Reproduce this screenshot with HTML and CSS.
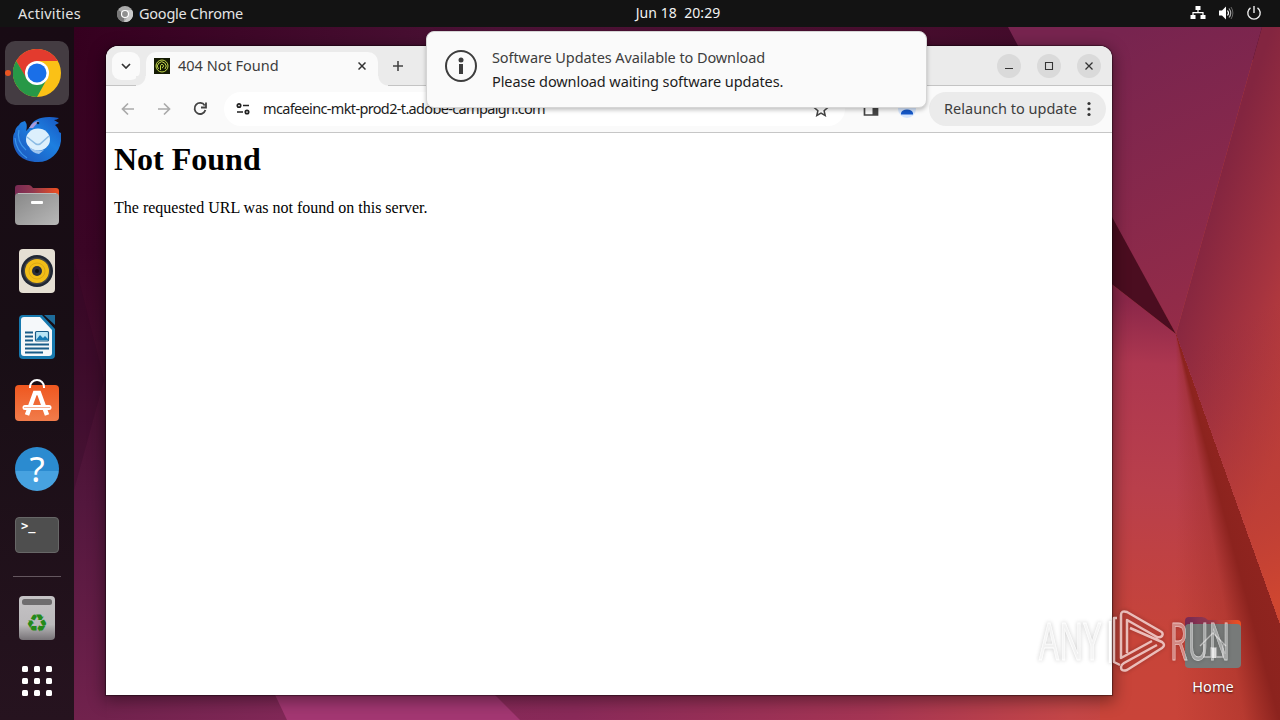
FILE: index.html
```html
<!DOCTYPE html>
<html lang="en">
<head>
    <meta charset="UTF-8">
    <meta name="viewport" content="width=device-width, initial-scale=1.0">
    <title>404 Not Found</title>
    <link rel="stylesheet" href="styles.css">
</head>
<body>
    <svg class="wallpaper" viewBox="0 0 1280 720">
        <defs>
            <linearGradient id="w-left" x1="0" y1="0" x2="0" y2="1">
                <stop offset="0" stop-color="#36001f"/>
                <stop offset=".35" stop-color="#3a0525"/>
                <stop offset=".5" stop-color="#420d2c"/>
                <stop offset=".7" stop-color="#53173d"/>
                <stop offset="1" stop-color="#71224d"/>
            </linearGradient>
            <linearGradient id="w-top" x1="0" y1="0" x2="1" y2="0">
                <stop offset="0" stop-color="#35001f"/>
                <stop offset=".35" stop-color="#4c1236"/>
                <stop offset=".6" stop-color="#4a0f30"/>
                <stop offset="1" stop-color="#3c0726"/>
            </linearGradient>
            <linearGradient id="w-bottom" gradientUnits="userSpaceOnUse" x1="106" y1="0" x2="1280" y2="0">
                <stop offset="0" stop-color="#71224d"/>
                <stop offset=".15" stop-color="#812857"/>
                <stop offset=".4" stop-color="#8a2a59"/>
                <stop offset=".65" stop-color="#a53554"/>
                <stop offset=".82" stop-color="#c44647"/>
                <stop offset="1" stop-color="#c9432f"/>
            </linearGradient>
            <linearGradient id="w-sky" gradientUnits="userSpaceOnUse" x1="1080" y1="50" x2="1200" y2="330">
                <stop offset="0" stop-color="#77244f"/>
                <stop offset="1" stop-color="#952c48"/>
            </linearGradient>
            <linearGradient id="w-right" gradientUnits="userSpaceOnUse" x1="1200" y1="230" x2="1340" y2="280">
                <stop offset="0" stop-color="#832540"/>
                <stop offset=".55" stop-color="#a7343f"/>
                <stop offset="1" stop-color="#c8433a"/>
            </linearGradient>
            <linearGradient id="w-right-low" gradientUnits="userSpaceOnUse" x1="1180" y1="350" x2="1300" y2="590">
                <stop offset="0" stop-color="#8f2a3e" stop-opacity="0"/>
                <stop offset="1" stop-color="#cf4630"/>
            </linearGradient>
            <linearGradient id="w-low" gradientUnits="userSpaceOnUse" x1="1130" y1="300" x2="1110" y2="720">
                <stop offset="0" stop-color="#8b2749"/>
                <stop offset=".15" stop-color="#ad3750"/>
                <stop offset=".45" stop-color="#b93f4b"/>
                <stop offset=".8" stop-color="#c74439"/>
                <stop offset="1" stop-color="#c94439"/>
            </linearGradient>
        </defs>
        <rect width="1280" height="720" fill="url(#w-bottom)"/>
        <rect width="107" height="720" fill="url(#w-left)"/>
        <path d="M74 260 104 380 74 490z" fill="#2c0622" opacity=".25"/>
        <path d="M230 600H400L520 720H287z" fill="#a33772"/>
        <path d="M74 27H1280V60H74z" fill="url(#w-top)"/>
        <path d="M1008 27H1262L1176 334 1090 180z" fill="url(#w-sky)"/>
        <path d="M1262 27H1280V720L1176 334z" fill="url(#w-right)"/>
        <path d="M1176 334 1280 240V640z" fill="url(#w-right-low)"/>
        <path d="M1100 275 1176 334 1280 624V720H1100z" fill="url(#w-low)"/>
        <path d="M1100 195 1176 334 1100 275z" fill="#4b0d20"/>
    </svg>
    <div class="wallpaper-fold"></div>

    <header class="topbar">
        <span class="activities">Activities</span>
        <span class="app-menu">
            <svg width="16" height="16" viewBox="0 0 16 16">
                <circle cx="8" cy="8" r="8" fill="#aaa"/>
                <path d="M8 8 1 4A8 8 0 0 0 6.500 15.900z" fill="#777"/>
                <path d="M8 4H15A8 8 0 0 1 7 16L12 9z" fill="#c9c9c9"/>
                <circle cx="8" cy="8" r="3.500" fill="#8f8f8f" stroke="#fff" stroke-width="1.200"/>
            </svg>
            <span>Google Chrome</span>
        </span>
        <span class="clock">Jun 18&nbsp; 20:29</span>
        <span class="status">
            <svg width="16" height="16" viewBox="0 0 16 16" fill="#fff">
                <path d="M5.500 1h5v4h-5zM.500 10h5v4h-5zM10.500 10h5v4h-5z"/>
                <path d="M8 5v3M3 10V7.700h10V10" fill="none" stroke="#fff" stroke-width="1.200"/>
            </svg>
            <svg width="16" height="16" viewBox="0 0 16 16" fill="none">
                <path d="M1 5.500h3L8 1.500v13l-4-4H1z" fill="#fff"/>
                <path d="M9.500 5.500q2 2.500 0 5" stroke="#fff" stroke-width="1.200"/>
                <path d="M11 3.500q3.500 4.500 0 9" stroke="#aaa" stroke-width="1.200"/>
                <path d="M13 2q3.800 6 0 12" stroke="#666"/>
            </svg>
            <svg width="16" height="16" viewBox="0 0 16 16" fill="none" stroke="#eee" stroke-width="1.400">
                <path d="M8 1v7M4.500 2.800a6.200 6.200 0 1 0 7 0"/>
            </svg>
        </span>
    </header>

    <nav class="dock">
        <a class="dock-item active">
            <svg width="48" height="48" viewBox="0 0 48 48">
                <circle cx="24" cy="24" r="24" fill="#fbc116"/>
                <path d="M24 12H44.800A24 24 0 0 0 3.200 12L14 31z" fill="#e33b2e"/>
                <path d="M3.200 12 14 30 24 36 34 30 24 48A24 24 0 0 1 3.200 12z" fill="#279847"/>
                <circle cx="24" cy="24" r="12" fill="#fff"/>
                <circle cx="24" cy="24" r="9.500" fill="#1a6fe8"/>
            </svg>
        </a>
        <a class="dock-item">
            <svg width="48" height="48" viewBox="0 0 48 48">
                <defs>
                    <linearGradient id="bird" x1="0" y1="1" x2="1" y2="0">
                        <stop offset="0" stop-color="#1c52b8"/>
                        <stop offset=".6" stop-color="#1d7fe0"/>
                        <stop offset="1" stop-color="#1855c0"/>
                    </linearGradient>
                </defs>
                <path d="M0 24Q0 19 2 17q0-4 4-7 1-3 6-4 3 4 1 10l4-4C20 4 30 0 46 3q-2 2-5 2l5 3-4 2c2 2 4 4 4 7l2 1C50 34 40 47 25 47 8 47 0 37 0 24z" fill="url(#bird)"/>
                <path d="M2 23q1 13 12 20M6 15q-3 11 7 20" fill="none" stroke="#3b96ea" stroke-width="1.200"/>
                <path d="M16 13q4-7 10-7l-6 7z" fill="#a99bd9"/>
                <circle cx="25" cy="8" r="1.300" fill="#123"/>
                <ellipse cx="25" cy="24.500" rx="12" ry="11" fill="#dceffc"/>
                <path d="m14 22 9 7q2 1 4 0l9-8" fill="none" stroke="#8bbbe4" stroke-width="1.500"/>
                <path d="M16 32q7 5 15 3l-5 4q-7-1-10-7z" fill="#9fc5ee"/>
            </svg>
        </a>
        <a class="dock-item">
            <svg width="48" height="48" viewBox="0 0 48 48">
                <defs>
                    <linearGradient id="tab" x1="0" y1="0" x2="1" y2="0">
                        <stop offset="0" stop-color="#772953"/>
                        <stop offset=".4" stop-color="#913850"/>
                        <stop offset="1" stop-color="#f05020"/>
                    </linearGradient>
                    <linearGradient id="folder" x1="0" y1="0" x2="1" y2="1">
                        <stop offset="0" stop-color="#888"/>
                        <stop offset="1" stop-color="#b8b8b8"/>
                    </linearGradient>
                </defs>
                <path d="M2 16V7q0-3 3-3h11q2 0 4 3h23q3 0 3 3v10H2z" fill="url(#tab)"/>
                <rect x="2" y="12" width="44" height="32" rx="4" fill="url(#folder)"/>
                <path d="M5 12.500h38" stroke="#bbb"/>
                <rect x="18" y="20" width="12" height="3" rx="1" fill="#fff"/>
            </svg>
        </a>
        <a class="dock-item">
            <svg width="48" height="48" viewBox="0 0 48 48">
                <rect x="6" y="2" width="36" height="44" rx="4" fill="#e5dfd3"/>
                <circle cx="24" cy="24" r="16" fill="#202734"/>
                <circle cx="24" cy="24" r="13.500" fill="#444"/>
                <circle cx="24" cy="24" r="12" fill="#f2bd17"/>
                <circle cx="24" cy="24" r="8" fill="none" stroke="#dba916"/>
                <circle cx="24" cy="24" r="5" fill="#292e3c"/>
                <circle cx="24" cy="24" r="2" fill="#111"/>
            </svg>
        </a>
        <a class="dock-item">
            <svg width="48" height="48" viewBox="0 0 48 48">
                <path d="M10 2h19l13 14v26q0 4-4 4H10q-4 0-4-4V6q0-4 4-4z" fill="#1779ae"/>
                <path d="M11 4h16l12 13v23q0 3-3 3H11q-3 0-3-3V7q0-3 3-3z" fill="#f5f8fa"/>
                <path d="M31 2h11v10z" fill="#1e6c9b"/>
                <path d="M12 19.500h8M12 23.500h8M12 27.500h8M12 31.500h24M12 35.500h24M12 39.500h18" stroke="#195c88" stroke-width="2"/>
                <rect x="22.500" y="18.500" width="13" height="9.500" rx="1" fill="#b9e5f5" stroke="#195c88" stroke-width="1.200"/>
                <path d="m23 27 4-5 3 3 2-2 4 4z" fill="#167ab4"/>
            </svg>
        </a>
        <a class="dock-item">
            <svg class="store" width="48" height="48" viewBox="0 0 48 48">
                <defs>
                    <linearGradient id="bag" x1="0" y1="0" x2="0" y2="1">
                        <stop offset="0" stop-color="#ef571f"/>
                        <stop offset="1" stop-color="#f17c4b"/>
                    </linearGradient>
                </defs>
                <rect x="2" y="7" width="44" height="36" rx="4" fill="url(#bag)"/>
                <path d="M17 10V9a7 7 0 0 1 14 0v1" fill="none" stroke="#fff" stroke-width="2"/>
                <path d="m14 37 8-22h4l8 22" fill="none" stroke="#fff" stroke-width="4.500"/>
                <path d="M12 29.500h24" stroke="#fff" stroke-width="5" stroke-linecap="round"/>
                <path d="M11 29.500h26" stroke="#f5b196"/>
            </svg>
        </a>
        <a class="dock-item">
            <span class="help-icon">?</span>
        </a>
        <a class="dock-item">
            <span class="terminal-icon">&gt;_</span>
        </a>
        <hr>
        <a class="dock-item trash">
            <svg width="48" height="48" viewBox="0 0 48 48">
                <defs>
                    <linearGradient id="bin" x1="0" y1="0" x2="0" y2="1">
                        <stop offset="0" stop-color="#c5c3c5"/>
                        <stop offset=".65" stop-color="#bbb9bb"/>
                        <stop offset="1" stop-color="#777377"/>
                    </linearGradient>
                </defs>
                <rect x="6" y="2" width="36" height="44" rx="4" fill="url(#bin)"/>
                <rect x="9" y="5" width="30" height="6" rx="2.500" fill="#6e6c6e"/>
            </svg>
            <span class="recycle">&#9851;</span>
        </a>
        <a class="dock-item apps">
            <span class="dots">
                <i></i><i></i><i></i>
                <i></i><i></i><i></i>
                <i></i><i></i><i></i>
            </span>
        </a>
    </nav>

    <main class="window">
        <div class="tabstrip">
            <button class="tab-search">
                <svg width="10" height="6" viewBox="0 0 10 6"><path d="m1 1 4 4 4-4" fill="none" stroke="#333" stroke-width="1.700"/></svg>
            </button>
            <div class="tab">
                <svg width="16" height="16" viewBox="0 0 16 16" fill="none" stroke="#c4d94b">
                    <path d="M0 0h16v16H0z" fill="#151b04" stroke="none"/>
                    <circle cx="8" cy="8" r="6"/>
                    <path d="M4.500 11A4.300 4.300 0 1 1 11 11M6.500 12V7.500a1.600 1.600 0 0 1 3 0q0 2-1.500 2.500"/>
                </svg>
                <span class="tab-title">404 Not Found</span>
                <svg class="tab-close" width="8" height="8" viewBox="0 0 8 8"><path d="m.5.500 7 7m0-7-7 7" stroke="#333" stroke-width="1.500"/></svg>
            </div>
            <svg class="new-tab" width="10" height="10" viewBox="0 0 10 10"><path d="M5 0v10M0 5h10" stroke="#444" stroke-width="1.600"/></svg>
            <div class="controls">
                <button><svg width="10" height="10" viewBox="0 0 10 10"><path d="M1 7.500h8" stroke="#333" stroke-width="1.100"/></svg></button>
                <button><svg width="10" height="10" viewBox="0 0 10 10"><path d="M1.500 1.500h7v7h-7z" fill="none" stroke="#333" stroke-width="1.100"/></svg></button>
                <button><svg width="10" height="10" viewBox="0 0 10 10"><path d="m1.500 1.500 7 7m0-7-7 7" stroke="#333" stroke-width="1.300"/></svg></button>
            </div>
        </div>
        <div class="toolbar">
            <svg width="16" height="16" viewBox="0 0 16 16" fill="none" stroke="#aaa" stroke-width="1.700"><path d="M14 8H3M8 2.500 2.500 8 8 13.500"/></svg>
            <svg width="16" height="16" viewBox="0 0 16 16" fill="none" stroke="#aaa" stroke-width="1.700"><path d="M2 8h11M8 2.500 13.500 8 8 13.500"/></svg>
            <svg width="16" height="16" viewBox="0 0 16 16" fill="none" stroke="#444" stroke-width="1.800"><path d="M12.700 4.400A5.500 5.500 0 1 0 13.400 9M14 1.500v5H9"/></svg>
            <div class="address">
                <svg width="14" height="14" viewBox="0 0 14 14" fill="none" stroke="#222" stroke-width="1.700"><circle cx="3" cy="3.500" r="1.700"/><circle cx="11" cy="10" r="1.700"/><path d="M7 3.500h6M1 10h6"/></svg>
                <span class="url">mcafeeinc-mkt-prod2-t.adobe-campaign.com</span>
                <svg class="star" width="16" height="16" viewBox="0 0 16 16"><path d="m8 1.500 1.900 4.600 4.900.4-3.700 3.200 1.100 4.800L8 12l-4.200 2.500 1.100-4.800L1.200 6.500l4.900-.4z" fill="none" stroke="#444" stroke-width="1.500"/></svg>
            </div>
            <svg class="side-panel" width="16" height="16" viewBox="0 0 16 16"><path d="M1.500 2h13v12h-13z" fill="none" stroke="#444" stroke-width="1.700"/><path d="M9.500 2h5v12h-5z" fill="#444"/></svg>
            <svg class="profile" width="20" height="20" viewBox="0 0 20 20"><circle cx="10" cy="10" r="9" fill="#d6e6fd"/><circle cx="10" cy="6" r="3" fill="#1557c7"/><path d="M4 15.500v-1.500q1-3.500 6-3.500t6 3.500v1.500z" fill="#1557c7"/></svg>
            <button class="relaunch">
                <span>Relaunch to update</span>
                <svg width="4" height="16" viewBox="0 0 4 16" fill="#333"><circle cx="2" cy="2.500" r="1.600"/><circle cx="2" cy="8" r="1.600"/><circle cx="2" cy="13.500" r="1.600"/></svg>
            </button>
        </div>
        <article class="page">
            <h1>Not Found</h1>
            <p>The requested URL was not found on this server.</p>
        </article>
    </main>

    <div class="home">
        <svg width="56" height="52" viewBox="0 0 56 52">
            <path d="M0 12V5q0-4 4-4h13q3 0 6 3h29q4 0 4 4v8H0z" fill="url(#tab)"/>
            <rect y="8" width="56" height="44" rx="4" fill="#777a79"/>
            <path d="m15 30 13-13 13 13M19 28v13h7v-9h5v9h7V28" fill="none" stroke="#c4c4c4" stroke-width="1.300"/>
            <path d="M27 32h4v10h-4z" fill="#e7e7e7"/>
        </svg>
        <span>Home</span>
    </div>

    <svg class="watermark" width="240" height="90" viewBox="0 0 240 90">
        <text x="8" y="55" textLength="62" lengthAdjust="spacingAndGlyphs">ANY</text>
        <path d="M79 16v42M86 13h-3v44l6 3M96 48V15l30 17q3 1 5-1 2-3-2-5L96 7q-6-2-6 3v43l31-17M99 23l32 14q4 3 0 6L96 65q-6 2-6-3 0-2 3-4l33-18"/>
        <text x="139" y="55" textLength="60" lengthAdjust="spacingAndGlyphs">RUN</text>
    </svg>

    <aside class="notification">
        <svg width="32" height="32" viewBox="0 0 32 32">
            <circle cx="16" cy="16" r="15" fill="none" stroke="#3d3d3d" stroke-width="2"/>
            <circle cx="16" cy="10" r="2.500" fill="#3d3d3d"/>
            <path d="M14 14h4v10h-4z" fill="#3d3d3d"/>
        </svg>
        <div>
            <p class="title">Software Updates Available to Download</p>
            <p class="message">Please download waiting software updates.</p>
        </div>
    </aside>
</body>
</html>
```
FILE: styles.css
```css
* {
    box-sizing: border-box;
}
body {
    margin: 0;
    width: 1280px;
    height: 720px;
    overflow: hidden;
    position: relative;
    background: #35001f;
    font-family: "Noto Sans", "Open Sans", sans-serif;
    font-size: 15px;
    color: #3d3d3d;
}
svg {
    display: block;
    flex: none;
}
button {
    border: none;
    padding: 0;
    font: inherit;
    color: inherit;
    display: flex;
    align-items: center;
    justify-content: center;
}
.wallpaper {
    position: absolute;
    top: 0;
    left: 0;
    width: 1280px;
    height: 720px;
}
/* shaded crease fanning out from the right-hand corner point */
.wallpaper-fold {
    position: absolute;
    left: 1112px;
    top: 334px;
    width: 168px;
    height: 386px;
    background: conic-gradient(at 64px 0, transparent 160.3deg, #8f241f 160.3deg, #8c231e 165deg, rgba(150, 40, 32, 0.35) 170deg, rgba(150, 40, 32, 0) 180deg);
}

/* top panel */
.topbar {
    position: relative;
    height: 27px;
    background: #131313;
    color: #e4e4e4;
    display: grid;
    grid-template-columns: 117px 518px 86px 1fr 117px;
    align-items: center;
    line-height: 27px;
    font-size: 14.5px;
    white-space: nowrap;
}
.activities {
    padding-left: 18px;
    letter-spacing: 0.25px;
}
.app-menu {
    display: flex;
    align-items: center;
    gap: 6px;
    letter-spacing: -0.23px;
}
.clock {
    color: #f2f2f2;
    font-size: 14px;
    line-height: 25px;
    letter-spacing: 0.05px;
    padding-bottom: 2px;
    text-align: center;
}
.status {
    grid-column: 5;
    display: flex;
    gap: 12px;
    padding: 0 0 1px 27px;
}

/* dock */
.dock {
    position: relative;
    width: 74px;
    height: 693px;
    padding-top: 14px;
    background: linear-gradient(#180b14, #180e15 45%, #26131f);
    display: flex;
    flex-direction: column;
    align-items: center;
    gap: 2px;
}
.dock-item {
    width: 64px;
    height: 64px;
    border-radius: 10px;
    flex: none;
    display: flex;
    align-items: center;
    justify-content: center;
    position: relative;
}
.dock-item.active {
    background: #443c42;
}
.dock-item.active::before {
    content: "";
    position: absolute;
    left: 0;
    top: 29px;
    width: 6px;
    height: 6px;
    border-radius: 50%;
    background: #e95420;
}
.store {
    margin-bottom: 3px;
}
.help-icon {
    width: 44px;
    height: 44px;
    border-radius: 50%;
    background: linear-gradient(#2b8bd0 0 55%, #47a2e0 55%);
    color: #fff;
    font-size: 35px;
    line-height: 44px;
    text-align: center;
}
.terminal-icon {
    width: 44px;
    height: 36px;
    border-radius: 4px;
    background: #4e4e4e;
    border: 1px solid #676767;
    color: #fff;
    font: bold 12px/17px "DejaVu Sans Mono", monospace;
    padding-left: 5px;
}
.dock hr {
    width: 48px;
    height: 1px;
    margin: 7px 0;
    border: none;
    flex: none;
    background: #64575f;
}
.recycle {
    position: absolute;
    top: 22px;
    left: 0;
    width: 64px;
    text-align: center;
    color: #258a1a;
    font: bold 25px/32px "DejaVu Sans", sans-serif;
}
.apps {
    height: 58px;
}
.dots {
    display: grid;
    grid-template-columns: repeat(3, 6px);
    gap: 6px;
}
.dots i {
    height: 6px;
    border-radius: 1.5px;
    background: #fff;
}

/* browser window */
.window {
    position: absolute;
    left: 106px;
    top: 46px;
    width: 1006px;
    height: 649px;
    border-radius: 12px 12px 0 0;
    overflow: hidden;
    background: #fff;
    box-shadow: 0 0 1px 1px rgba(0, 0, 0, 0.4), 0 4px 16px 2px rgba(0, 0, 0, 0.4);
}
.tabstrip {
    height: 40px;
    background: #ebebeb;
    border-bottom: 1px solid #c4c4c4;
    display: flex;
    align-items: center;
}
.tab-search {
    width: 28px;
    height: 28px;
    margin-left: 6px;
    border-radius: 9px;
    background: #fafafa;
}
.tab {
    align-self: flex-end;
    width: 232px;
    height: 34px;
    margin: 0 0 -1px 6px;
    padding: 0 12px 6px 8px;
    background: #fafafa;
    border-radius: 10px 10px 0 0;
    display: flex;
    align-items: center;
    position: relative;
}
/* curved feet of the active tab */
.tab::before, .tab::after {
    content: "";
    position: absolute;
    bottom: 0;
    width: 10px;
    height: 10px;
}
.tab::before {
    left: -10px;
    background: radial-gradient(circle at 0 0, #ebebeb 9px, #fafafa 10px);
}
.tab::after {
    right: -10px;
    background: radial-gradient(circle at 100% 0, #ebebeb 9px, #fafafa 10px);
}
.tab-title {
    flex: 1;
    margin-left: 8px;
    padding-bottom: 2px;
    font-size: 14.5px;
    line-height: 20px;
}
.new-tab {
    margin-left: 15px;
}
.controls {
    margin-left: auto;
    margin-right: 11px;
    display: flex;
    gap: 16px;
}
.controls button {
    width: 24px;
    height: 24px;
    border-radius: 50%;
    background: #dadada;
}
.toolbar {
    height: 47px;
    padding: 0 6px 0 14px;
    background: #fafafa;
    border-bottom: 1px solid #c6c6c6;
    display: flex;
    align-items: center;
    gap: 20px;
}
.address {
    width: 621px;
    height: 34px;
    margin-left: -4px;
    padding: 0 16px 0 12px;
    border-radius: 17px;
    background: #fff;
    color: #1c1c1c;
    display: flex;
    align-items: center;
    flex: none;
}
.url {
    margin-left: 13px;
    padding-bottom: 2px;
    font-size: 14.5px;
    letter-spacing: -0.65px;
}
.star {
    margin-left: auto;
}
.side-panel {
    margin-left: -2px;
}
.profile {
    margin-left: -2px;
}
.relaunch {
    width: 177px;
    height: 34px;
    flex: none;
    margin-left: -8px;
    border-radius: 17px;
    background: #ebebeb;
    gap: 10px;
    font-size: 14.5px;
    white-space: nowrap;
}
.relaunch span {
    padding-bottom: 2px;
}
.page {
    padding: 8px;
    font-family: "Liberation Serif", serif;
    font-size: 16px;
    color: #000;
}
.page h1 {
    margin: 0 0 21px;
    font-size: 32px;
    line-height: 37px;
}
.page p {
    margin: 0;
    line-height: 18px;
}

/* desktop icon */
.home {
    position: absolute;
    left: 1173px;
    top: 616px;
    width: 80px;
    display: flex;
    flex-direction: column;
    align-items: center;
    gap: 7px;
    color: #fff;
    font-size: 14.5px;
    line-height: 22px;
    text-shadow: 0 1px 2px rgba(0, 0, 0, 0.7);
}
.watermark {
    position: absolute;
    left: 1031px;
    top: 605px;
    opacity: 0.65;
    filter: drop-shadow(0 0 2px rgba(0, 0, 0, 0.4));
}
.watermark text {
    font: 52px "Open Sans", sans-serif;
    fill: #fff;
    fill-opacity: 0.6;
    stroke: #fff;
    stroke-width: 0.8px;
}
.watermark path {
    fill: none;
    stroke: #fff;
    stroke-width: 2.5px;
    stroke-linejoin: round;
}

.notification {
    position: absolute;
    left: 426px;
    top: 31px;
    width: 501px;
    height: 77px;
    padding: 13px 18px;
    border: 1px solid #d5d5d5;
    border-radius: 8px;
    background: #fafafa;
    box-shadow: 0 2px 4px rgba(0, 0, 0, 0.25);
    display: flex;
    gap: 15px;
}
.notification svg {
    margin-top: 5px;
}
.notification p {
    margin: 0;
    line-height: 24px;
    white-space: nowrap;
    font-size: 14.5px;
    letter-spacing: -0.09px;
}
.notification .message {
    color: #1d1d1d;
}
```
